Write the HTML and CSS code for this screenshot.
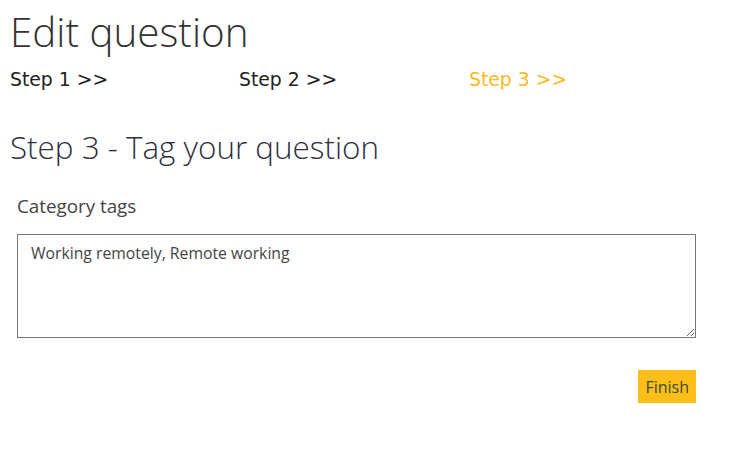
FILE: index.html
```html
<!DOCTYPE html>
<html>
<head>
<meta charset="utf-8">
<link rel="stylesheet" href="styles.css">
</head>
<body>
<div class="page">
  <h1 class="title">Edit question</h1>
  <div class="steps">
    <span class="step">Step 1 &gt;&gt;</span>
    <span class="step">Step 2 &gt;&gt;</span>
    <span class="step active">Step 3 &gt;&gt;</span>
  </div>
  <h2 class="subtitle">Step 3 - Tag your question</h2>
  <div class="field">
    <label class="label" for="tags">Category tags</label>
    <textarea id="tags" class="tags">Working remotely, Remote working</textarea>
    <div class="actions">
      <button class="finish">Finish</button>
    </div>
  </div>
</div>
</body>
</html>
```
FILE: styles.css
```css
html, body {
  margin: 0;
  padding: 0;
  background: #fff;
}
.page {
  padding: 0 10px;
  font-family: "Open Sans", sans-serif;
  color: #333;
}
.title {
  margin: 0;
  padding-top: 5px;
  font-weight: 300;
  font-size: 40.4px;
  line-height: 54px;
  color: #333;
}
.steps {
  display: grid;
  grid-template-columns: 229px 230px 230px;
  margin-top: 10px;
  font-family: "DejaVu Sans", sans-serif;
  font-size: 18.8px;
  line-height: 22px;
  color: #222;
}
.step.active {
  color: #fdb924;
}
.subtitle {
  margin: 34px 0 0;
  font-weight: 300;
  font-size: 31.4px;
  line-height: 44px;
  color: #2f2f3f;
}
.field {
  padding: 0 25px 0 7px;
  display: flex;
  flex-direction: column;
}
.label {
  margin-top: 25px;
  font-size: 18.8px;
  line-height: 24px;
  color: #444;
}
.tags {
  margin-top: 16px;
  height: 104px;
  box-sizing: border-box;
  border: 1px solid #777;
  padding: 7px 13px;
  font-family: "Open Sans", sans-serif;
  font-size: 15.75px;
  line-height: 22px;
  color: #444;
  resize: vertical;
}
.actions {
  display: flex;
  justify-content: flex-end;
  margin-top: 32px;
}
.finish {
  background: #fdbf17;
  border: none;
  height: 33px;
  padding: 0 7px;
  font-family: "Open Sans", sans-serif;
  font-size: 16px;
  color: #3c4a3e;
}
```
